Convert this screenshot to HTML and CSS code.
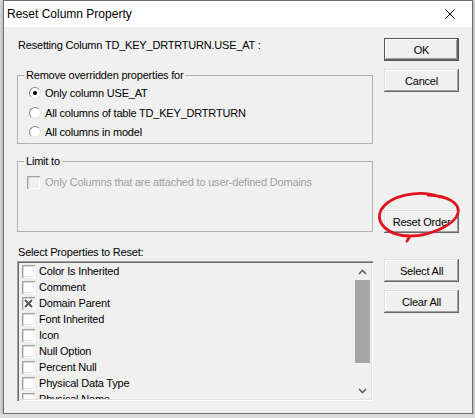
FILE: index.html
```html
<!DOCTYPE html>
<html lang="en">

<head>
    <meta charset="UTF-8">
    <title>Reset Column Property</title>
    <link rel="stylesheet" href="styles.css">
</head>

<body>
    <div class="dialog">
        <div class="titlebar">
            <span class="title">Reset Column Property</span>
            <svg class="close" width="10" height="10" viewBox="0 0 10 10">
                <path d="M0.5 0.5 L9.5 9.5 M9.5 0.5 L0.5 9.5" stroke="#000" stroke-width="1" fill="none" />
            </svg>
        </div>

        <div class="client">
            <div class="main">
                <p class="intro">Resetting Column TD_KEY_DRTRTURN.USE_AT :</p>

                <fieldset class="group groupRemove">
                    <legend>Remove overridden properties for</legend>
                    <div class="option"><span class="radio checked"></span>Only column USE_AT</div>
                    <div class="option"><span class="radio"></span>All columns of table TD_KEY_DRTRTURN</div>
                    <div class="option"><span class="radio"></span>All columns in model</div>
                </fieldset>

                <fieldset class="group groupLimit">
                    <legend>Limit to</legend>
                    <div class="option disabled"><span class="check"></span>Only Columns that are attached to user-defined Domains</div>
                </fieldset>

                <p class="listLabel">Select Properties to Reset:</p>
                <div class="listbox">
                    <ul class="items">
                        <li><span class="check"></span>Color Is Inherited</li>
                        <li><span class="check"></span>Comment</li>
                        <li><span class="check">
                            <svg width="9" height="9" viewBox="0 0 9 9">
                                <path d="M1 1 L8 8 M8 1 L1 8" stroke="#555" stroke-width="2" fill="none" />
                            </svg>
                        </span>Domain Parent</li>
                        <li><span class="check"></span>Font Inherited</li>
                        <li><span class="check"></span>Icon</li>
                        <li><span class="check"></span>Null Option</li>
                        <li><span class="check"></span>Percent Null</li>
                        <li><span class="check"></span>Physical Data Type</li>
                        <li><span class="check"></span>Physical Name</li>
                    </ul>
                    <div class="scrollbar">
                        <span class="arrow">
                            <svg width="9" height="6" viewBox="0 0 9 6">
                                <path d="M1 5 L4.5 1.5 L8 5" stroke="#606060" stroke-width="1.6" fill="none" />
                            </svg>
                        </span>
                        <span class="track"><span class="thumb"></span></span>
                        <span class="arrow">
                            <svg width="9" height="6" viewBox="0 0 9 6">
                                <path d="M1 1 L4.5 4.5 L8 1" stroke="#606060" stroke-width="1.6" fill="none" />
                            </svg>
                        </span>
                    </div>
                </div>
            </div>

            <div class="buttons">
                <button class="btn default">OK</button>
                <button class="btn">Cancel</button>
                <div class="resetWrap">
                    <button class="btn">Reset Order</button>
                    <!-- red marker circle drawn over the button -->
                    <svg class="scribble" width="90" height="56" viewBox="0 0 90 56">
                        <path d="M64 7 C44 -1, 14 5, 5 20 C-1 33, 12 46, 34 46 C54 46, 79 35, 82 23 C84 13, 72 6, 52 5 M34 46 L31 51"
                            stroke="#e0141e" stroke-width="2.8" fill="none" stroke-linecap="round" />
                    </svg>
                </div>
                <button class="btn selectAll">Select All</button>
                <button class="btn">Clear All</button>
            </div>
        </div>
    </div>
</body>

</html>
```

FILE: styles.css
```css
body {
    margin: 0;
    padding: 0 0 0 3px;
    background-color: #dcdcdc;
    font-family: "Liberation Sans", Arial, sans-serif;
    font-size: 11px;
    letter-spacing: -0.2px;
    color: #000;
}

.dialog {
    width: 470px;
    height: 414px;
    box-sizing: border-box;
    border: 1px solid #707070;
    background-color: #f0f0f0;
    display: flex;
    flex-direction: column;
    box-shadow: 0 1px 4px rgba(0, 0, 0, 0.35);
}

.titlebar {
    height: 26px;
    background-color: #fff;
    display: flex;
    align-items: center;
    justify-content: space-between;
    padding: 0 17px 0 3px;
}

.title {
    font-size: 12px;
    letter-spacing: 0;
    line-height: 16px;
}

.client {
    flex: 1;
    display: flex;
    gap: 11px;
    padding: 11px 13px 0 13px;
}

.main {
    width: 356px;
    display: flex;
    flex-direction: column;
}

.intro,
.listLabel {
    margin: 0;
    line-height: 14px;
    padding-left: 1px;
}

.group {
    margin: 0;
    padding: 0;
    border: 1px solid #b0b0b0;
    min-width: 0;
}

.group legend {
    line-height: 13px;
    padding: 0 2px;
    margin-left: 6px;
}

.groupRemove {
    margin-top: 17px;
    padding: 1.5px 0 1px 0;
}

.groupRemove .option {
    height: 19.5px;
    margin-left: 11px;
}

.groupLimit {
    margin-top: 11px;
    padding: 7px 0 42px 0;
}

.groupLimit .option {
    height: 14px;
    margin-left: 9px;
}

.option {
    display: flex;
    align-items: center;
    gap: 4px;
    white-space: nowrap;
}

.option.disabled {
    color: #a0a0a0;
    gap: 5px;
}

.radio {
    width: 12px;
    height: 12px;
    box-sizing: border-box;
    border-radius: 50%;
    border: 1px solid;
    border-color: #8a8a8a #e3e3e3 #e3e3e3 #8a8a8a;
    background-color: #fff;
    display: flex;
    align-items: center;
    justify-content: center;
}

.radio.checked::after {
    content: "";
    width: 4px;
    height: 4px;
    border-radius: 50%;
    background-color: #000;
}

.check {
    width: 13px;
    height: 13px;
    flex-shrink: 0;
    box-sizing: border-box;
    background-color: #fff;
    box-shadow: inset 1px 1px #a0a0a0, inset 2px 2px #d8d8d8, inset -1px -1px #fff, inset -2px -2px #ececec;
    display: flex;
    align-items: center;
    justify-content: center;
}

.disabled .check {
    background-color: #f0f0f0;
}

.listLabel {
    margin-top: 13px;
}

.listbox {
    margin-top: 2px;
    height: 140px;
    box-sizing: border-box;
    padding: 2px;
    display: flex;
    background-color: #f0f0f0;
    box-shadow: inset 1px 1px #a0a0a0, inset 2px 2px #696969, inset -1px -1px #fff, inset -2px -2px #e3e3e3;
}

.items {
    flex: 1;
    list-style: none;
    margin: 0;
    padding: 0 0 0 3px;
    overflow: hidden;
}

.items li {
    height: 16px;
    display: flex;
    align-items: center;
    gap: 4px;
    white-space: nowrap;
}

.scrollbar {
    width: 17px;
    display: flex;
    flex-direction: column;
}

.arrow {
    height: 17px;
    display: flex;
    align-items: center;
    justify-content: center;
}

.track {
    flex: 1;
    padding-left: 1px;
}

.thumb {
    display: block;
    width: 15px;
    height: 83px;
    background-color: #a6a6a6;
}

.buttons {
    width: 75px;
    display: flex;
    flex-direction: column;
}

.btn {
    width: 75px;
    height: 23px;
    margin: 8px 0 0 0;
    padding: 0;
    border: none;
    font-family: inherit;
    font-size: 11px;
    letter-spacing: -0.2px;
    color: #000;
    background-color: #f0f0f0;
    box-shadow: inset -1px -1px #696969, inset 1px 1px #e3e3e3, inset -2px -2px #a0a0a0, inset 2px 2px #fff;
}

.btn.default {
    margin-top: 0;
    box-shadow: inset 0 0 0 1px #555, inset -2px -2px #696969, inset 2px 2px #fff, inset -3px -3px #a0a0a0;
}

.resetWrap {
    position: relative;
    margin-top: 118px;
}

.resetWrap .btn {
    margin-top: 0;
    display: block;
}

.scribble {
    position: absolute;
    left: -8px;
    top: -20px;
}

.selectAll {
    margin-top: 26px;
}
```
